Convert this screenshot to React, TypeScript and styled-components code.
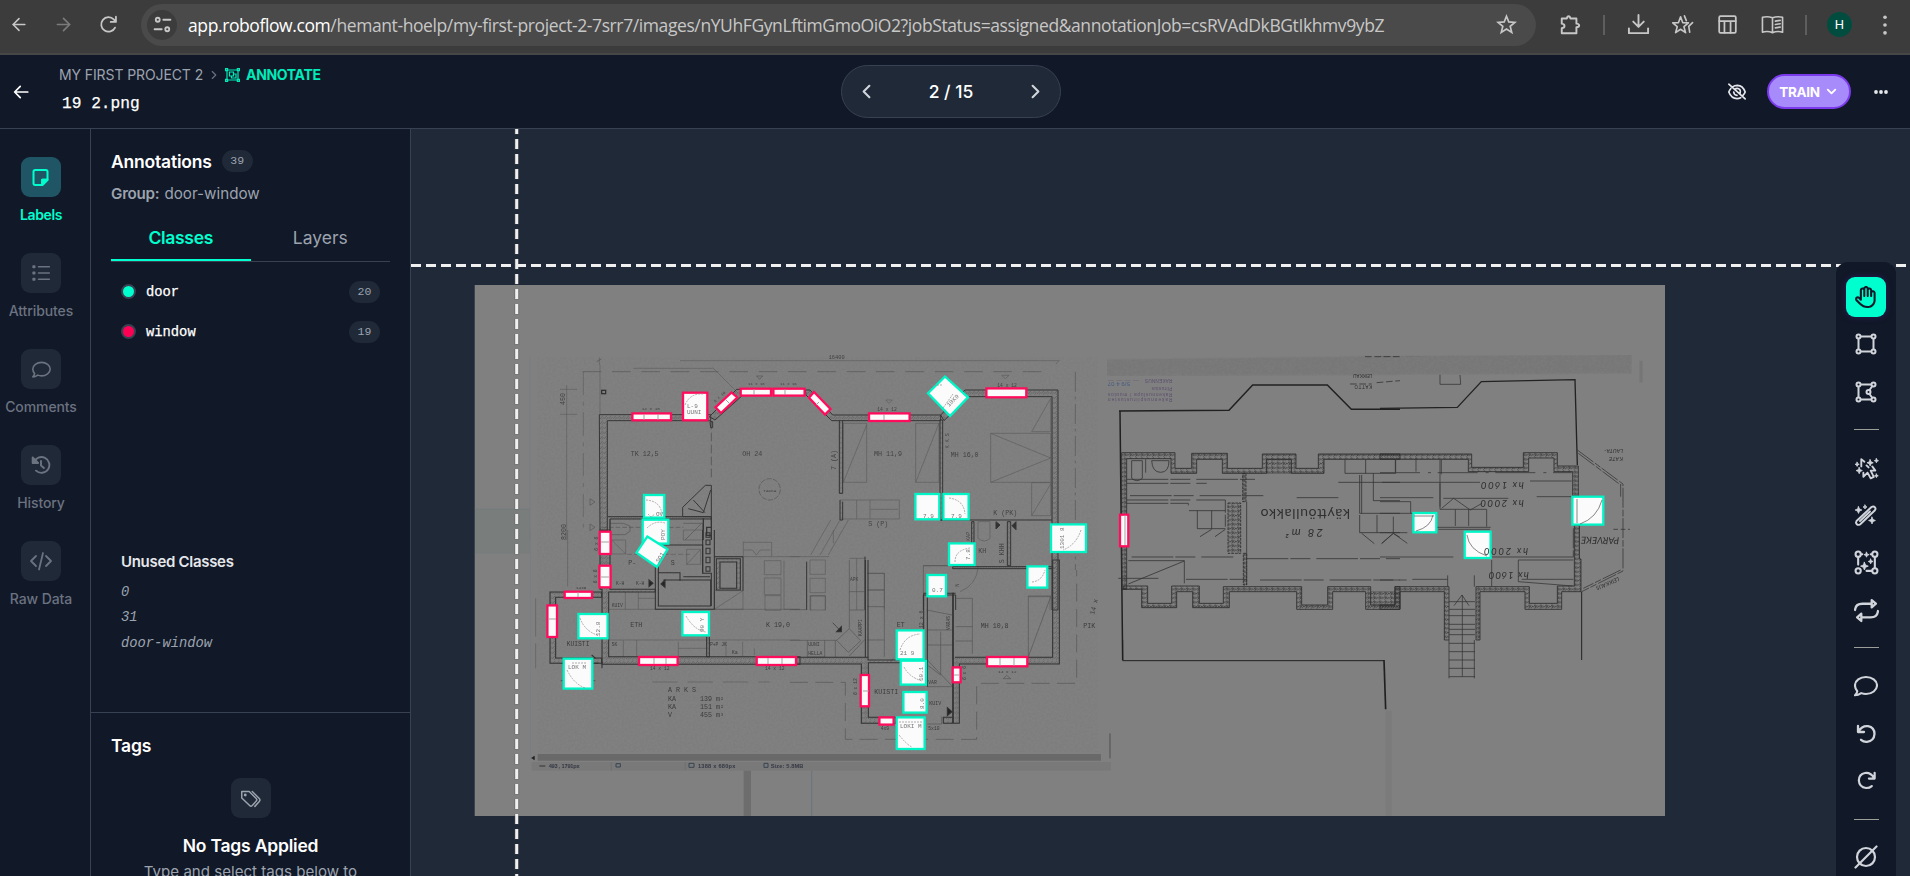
import React from 'react';
import styled, { createGlobalStyle } from 'styled-components';
import { ArrowLeft, ArrowRight, ChevronDown, ChevronLeft, ChevronRight } from 'lucide-react';
import { FaRegHand } from 'react-icons/fa6';

const Global = createGlobalStyle`
  * { box-sizing: border-box; }
  body { margin: 0; background: #111827; overflow: hidden; font-family: Inter, "Liberation Sans", sans-serif; }
`;

const mono = '"Liberation Mono", monospace';

const Page = styled.div`
  width: 1910px; height: 876px; display: flex; flex-direction: column; overflow: hidden;
  background: #111827; color: #fff;
`;
const Browser = styled.div`
  height: 55px; flex: none; background: #3c3c3c; border-bottom: 2px solid #474747;
  display: flex; align-items: center; padding: 0 0 4px 9px; color: #c7c7c7;
`;
const BrowserButton = styled.span<{ $w: number; $dim?: boolean }>`
  width: ${p => p.$w}px; flex: none; display: flex; justify-content: center; align-items: center;
  color: ${p => (p.$dim ? '#7b7b7b' : '#c7c7c7')};
`;
const Address = styled.div`
  width: 1395px; height: 42px; margin-left: 22px; border-radius: 21px; background: #4a4a4a; flex: none;
  display: flex; align-items: center; padding: 0 19px 0 6px;
`;
const SiteInfo = styled.span`
  width: 30px; height: 30px; border-radius: 50%; background: #3c3c3c;
  display: flex; align-items: center; justify-content: center;
`;
const Url = styled.span`
  flex: 1; margin-left: 11px; font: 17.5px/24px "Open Sans", "Noto Sans", sans-serif; letter-spacing: -0.4px;
  color: #c7c7c7; white-space: nowrap;
  b { font-weight: 400; color: #fff; }
`;
const Rule = styled.i`width: 2px; height: 20px; background: #5e5e5e; flex: none;`;
const Avatar = styled.span`
  width: 25px; height: 25px; border-radius: 50%; background: #004d40; color: #fff;
  font: 13px/25px Roboto, sans-serif; text-align: center; flex: none;
`;

const Header = styled.header`
  height: 74px; flex: none; border-bottom: 1px solid #374151; display: grid;
  grid-template-columns: 841px 220px 1fr; align-items: center;
`;
const HeaderLeft = styled.div`display: flex; align-items: center; padding-left: 12px; height: 73px;`;
const Titles = styled.div`margin-left: 29px; padding-bottom: 2px;`;
const Crumbs = styled.div`
  display: flex; align-items: center; font-size: 14px; line-height: 20px; color: #9ca3af; white-space: nowrap;
  svg { flex: none; }
`;
const CrumbText = styled.span`letter-spacing: -0.1px; margin-right: 4px;`;
const Active = styled.span`font-weight: 700; color: #00ebba; margin-left: 6px; letter-spacing: -0.35px;`;
const FileName = styled.div`font: 16.2px/24px ${mono}; margin: 7px 0 0 3px; color: #fff; -webkit-text-stroke: 0.25px #fff;`;
const Pager = styled.div`
  height: 53px; border: 1px solid #374151; border-radius: 27px; background: #1f2937;
  display: flex; align-items: center; justify-content: space-between; padding: 0 13px; font-size: 17.5px; font-weight: 500;
  color: #fff; svg { color: #d1d5db; }
`;
const HeaderRight = styled.div`display: flex; align-items: center; justify-content: flex-end; padding-right: 22px;`;
const Train = styled.button`
  width: 84px; height: 35px; margin: 0 23px 0 20px; border-radius: 18px; border: 2px solid #7c3aed; background: #a78bfa;
  color: #fff; font: 700 13.5px Inter, sans-serif; letter-spacing: -0.3px; display: flex; align-items: center; justify-content: center; gap: 4px; padding: 0;
`;

const Body = styled.div`flex: 1; min-height: 0; display: flex;`;
const Rail = styled.nav`
  width: 91px; flex: none; border-right: 1px solid #374151; padding: 28px 8px 0 0; display: flex; flex-direction: column; align-items: center;
`;
const RailItem = styled.div<{ $on?: boolean }>`
  height: 96px; flex: none; display: flex; flex-direction: column; align-items: center; white-space: nowrap;
  font-size: 14px; line-height: 20px; font-weight: ${p => (p.$on ? 600 : 500)};
  color: ${p => (p.$on ? '#00ffce' : '#6b7280')};
  letter-spacing: ${p => (p.$on ? '-0.35px' : '-0.1px')};
`;
const Tile = styled.span<{ $on?: boolean }>`
  width: 40px; height: 40px; border-radius: 9px; margin-bottom: 8px; display: flex; align-items: center; justify-content: center;
  background: ${p => (p.$on ? '#205565' : '#1f2937')};
`;
const Side = styled.aside`
  width: 320px; flex: none; border-right: 1px solid #374151; display: flex; flex-direction: column;
`;
const Upper = styled.section`height: 584px; flex: none; padding: 21px 20px 0 20px; border-bottom: 1px solid #374151;`;
const TitleRow = styled.div`display: flex; align-items: center; height: 22px; gap: 10px;`;
const Title = styled.h2`margin: 0; padding-top: 1px; font-size: 17.5px; font-weight: 600; line-height: 22px; letter-spacing: -0.2px;`;
const Count = styled.span`
  width: 31px; height: 22px; border-radius: 11px; background: #1f2937; color: #9ca3af; font: 11.5px/22px ${mono}; text-align: center; flex: none;
`;
const Group = styled.div`
  margin-top: 11px; font-size: 15.2px; line-height: 22px; color: #9ca3af;
  b { font-weight: 600; margin-right: 5px; letter-spacing: -0.25px; }
`;
const Tabs = styled.div`display: flex; margin-top: 10px; height: 47px; border-bottom: 1px solid #374151;`;
const Tab = styled.div<{ $on?: boolean }>`
  flex: 1; text-align: center; font-size: 17.5px; line-height: 45px; height: 46px;
  font-weight: ${p => (p.$on ? 600 : 400)}; color: ${p => (p.$on ? '#00ffce' : '#9ca3af')};
  letter-spacing: ${p => (p.$on ? '-0.3px' : '0')};
  border-bottom: 2px solid ${p => (p.$on ? '#00ffce' : 'transparent')};
`;
const Classes = styled.div`height: 290px; padding: 10px 10px 0;`;
const ClassRow = styled.div`height: 40px; display: flex; align-items: center; justify-content: space-between;`;
const Swatch = styled.i<{ $c: string }>`
  width: 15px; height: 15px; border-radius: 50%; border: 2px solid #374151; background: ${p => p.$c};
  flex: none; margin: 0 10px 1px 0;
`;
const ClassName = styled.span`
  flex: 1; padding-top: 2px; font: 13.8px/20px ${mono}; color: #fff; -webkit-text-stroke: 0.25px #fff;
`;
const Unused = styled.div`padding-left: 10px;`;
const UnusedTitle = styled.div`font-size: 15px; font-weight: 600; line-height: 20px; color: #e5e7eb; margin-bottom: 8px; letter-spacing: -0.3px;`;
const UnusedItem = styled.div`font: italic 13.8px/25.3px ${mono}; color: #9ca3af;`;
const Lower = styled.section`padding: 20px 20px 0 20px; display: flex; flex-direction: column; align-items: center; white-space: nowrap;`;
const TagTitle = styled(Title)`align-self: flex-start; line-height: 24px; margin-bottom: 20px;`;
const TagTile = styled(Tile)`margin-bottom: 16px; color: #9ca3af; flex: none;`;
const EmptyText = styled.p`margin: 3px 0 0; font-size: 15.1px; line-height: 24px; color: #9ca3af;`;

const Canvas = styled.main`flex: 1; min-width: 0; background: #1f2937; position: relative; overflow: hidden;
  > svg { display: block; }
`;
const Tools = styled.div`
  position: absolute; right: 14px; top: 133px; bottom: 0; width: 60px; background: #111827; border-radius: 12px 12px 0 0;
  display: flex; flex-direction: column; align-items: center; padding-top: 15px; color: #d1d5db;
`;
const Tool = styled.span<{ $h?: number; $on?: boolean }>`
  width: 40px; height: ${p => p.$h ?? 48}px; flex: none; display: flex; align-items: center; justify-content: center;
  ${p => p.$on && 'background:#00ffce;color:#111827;border-radius:9px;margin-bottom:3px;box-shadow:0 0 6px #4c1d9580;'}
`;
const Divider = styled.i`width: 25px; height: 1px; flex: none; background: #9c9f98;`;

const Ico = ({ s = 24, w = 2, f = 'none', children }: { s?: number; w?: number; f?: string; children: React.ReactNode }) => (
  <svg width={s} height={s} viewBox="0 0 24 24" fill={f} stroke="currentColor" strokeWidth={w} strokeLinecap="round" strokeLinejoin="round">{children}</svg>
);
const star = (x: number, y: number, r: number) =>
  `M${x} ${y - r}L${x + r * 0.3} ${y - r * 0.3}L${x + r} ${y}L${x + r * 0.3} ${y + r * 0.3}L${x} ${y + r}L${x - r * 0.3} ${y + r * 0.3}L${x - r} ${y}L${x - r * 0.3} ${y - r * 0.3}Z`;

const Bubble = ({ s, w }: { s: number; w: number }) => (
  <Ico s={s} w={w}><path d="M12 3c6 0 11 3.7 11 8.4S18 20 12 20c-1.700 0-3.300-.3-4.800-.9C5.700 20.200 3.500 21.300 1 21.300c1.300-1.300 2-2.700 2.300-4.100C1.900 15.600 1 13.600 1 11.400 1 6.700 6 3 12 3Z" /></Ico>
);

const doors = [
  [643.3, 494.3, 665, 518.3], [642, 519, 669, 544.3], [577.7, 613.3, 608.3, 639], [681.7, 611.3, 709.7, 636], [563, 658, 593, 689.3],
  [914.7, 493.3, 940, 520], [942.7, 493.3, 969.3, 520], [948.3, 542.7, 975.3, 565.7], [926.7, 574.3, 946.7, 597], [1026.7, 565.7, 1048, 588.3],
  [1050.3, 523.7, 1086.7, 552.7], [896, 629.7, 924.3, 660], [900, 660, 926.7, 685.3], [902.7, 691.3, 927.3, 713.3], [896, 716.7, 925.3, 749.7],
  [1412.7, 512.3, 1437, 533], [1464, 531, 1491.3, 558.7], [1571.7, 496, 1604, 525.3],
];
const doorPolys = ['647.3,536.5 667.5,549.3 657,567 636.5,552.7', '945,376.500 968,397.300 950,416 928,393.300'];
const windows = [
  [631.7, 412.7, 671.7, 421], [682.3, 392, 708, 421], [740, 388, 771.7, 396.3], [772.7, 388, 805.3, 396.3], [868.3, 412.7, 910.3, 421.7],
  [985.7, 387.7, 1027, 398], [599, 531, 611.3, 554.7], [598.7, 565, 611.3, 588], [564, 591, 592.7, 598.7], [546.7, 604.7, 557.7, 637.7],
  [638.3, 656.3, 678.3, 665.7], [756, 656.3, 796.7, 665.7], [860, 674.3, 869.7, 707], [878.7, 716.7, 894.3, 725.3], [952, 666.7, 961.3, 683],
  [986.3, 656.3, 1028, 667], [1119.3, 514, 1129, 547],
];
const windowPolys = ['715.500,407.300 731.500,392.500 737.300,397.500 721,413', '814,392 830.500,409 825,414.500 809,397.700'];

const Boxes = ({ list, polys, c }: { list: number[][]; polys: string[]; c: string }) => (
  <g fill="#fbfbfb" stroke={c} strokeWidth="2.3">
    {list.map(([a, b, x, y], i) => <rect key={i} x={a + 0.7} y={b + 0.7} width={x - a - 1.4} height={y - b - 1.4} />)}
    {polys.map(p => <polygon key={p} points={p} />)}
  </g>
);

/* Each part of the plan is drawn on a grid three times finer than the canvas. */
const Part = ({ x, y, children }: { x: number; y: number; children: React.ReactNode }) => (
  <g transform={`translate(${x} ${y}) scale(.33333)`}>{children}</g>
);

const UpperLeft = () => (
  <Part x={470} y={270}>
    <g fill="none" stroke="#4b4b4b" strokeWidth="2">
      <path d="M180 260V810M14 717H178" stroke="#717a7c" />
      <path d="M388 262V285M390 285V432M630 272H1765" strokeWidth="1.500" />
      <path d="M380 275l14-8" />
      <path d="M338 305H1720" strokeDasharray="56 32" />
      <path d="M340 305V780" strokeDasharray="70 20 12 20" strokeWidth="1.500" />
      <path d="M290 345V810M270 358H322M270 433H322M728 293L795 360M490 295H728" strokeWidth="1.500" />
      <path d="M724 452V630" strokeDasharray="26 10" strokeWidth="2.500" />
      <circle cx="899" cy="658" r="32" strokeDasharray="16 4" />
      <path d="M360 686l15 10-15 10zM360 762l15 10-15 10zM860 318h18l-9 10z" />
      <path d="M397 772H640" strokeDasharray="14 6" />
      <path d="M420 760h40l20 8v16l-15 10h-40M640 760h58v50M645 810l50-50" />
    </g>
    <g fill="url(#hatch)" stroke="#262626" strokeWidth="3">
      <path d="M388 434H722V452H412V782H390Z" />
      <path d="M638 740V712L706 646H724V740ZM655 716L700 728M700 728L722 660M670 690L705 728" fill="none" />
      <path d="M414 740H724V747H420" /><path d="M420 747V810M700 745V810M724 740V810M710 772h14v24h-14z" fill="none" strokeWidth="4" />
      <path d="M718 440L800 358H820V374L735 450ZM720 455h8v18h-6z" />
    </g>
    <g fill="#333" fontSize="20" fontFamily="Liberation Mono">
      <text x="482" y="557">TK  12,5</text><text x="817" y="557">OH 24</text>
      <text x="880" y="665" fontSize="13">TAKKA</text>
      <text transform="translate(286 405) rotate(-90)">450</text><text transform="translate(288 810) rotate(-90)">8200</text>
      <text x="515" y="421" fontSize="13">14 x 10</text><text x="834" y="346" fontSize="12">11 x 16</text><text x="930" y="346" fontSize="12">11 x 16</text>
      <text transform="translate(736 398) rotate(-43)" fontSize="12">9 x 16</text>
      <rect x="395" y="361" width="12" height="10" fill="none" stroke="#222" strokeWidth="4" />
    </g>
  </Part>
);

const UpperRight = () => (
  <Part x={790} y={340}>
    <g fill="none" stroke="#4b4b4b" strokeWidth="1.600">
      <path d="M798 72l10-12" />
      <path d="M856 96V690" strokeDasharray="60 14 8 14" strokeWidth="2" />
      <path d="M160 250H230V427H160zM160 427L230 255M377 250H447V427H377zM377 427L447 250" />
      <path d="M602 280H782V427H602zM602 280L782 354L602 427M725 275L782 175V275zM725 428H782V527H725zM725 527L782 432" />
      <path d="M150 480H328V537H155M200 480v57M240 480v57M242 508h82M122 540L62 645M150 540L90 645M175 540L115 645M0 650H118M130 570V610" />
      <path d="M564 545v50q20 16 36 0v-50zM287 180h20l-10 10zM635 106h22l-11 10zM400 677H545M510 755q50-20 55-75M715 770H780V810" />
      <path d="M60 660h46v43H60zM60 715h46v43H60zM60 767h46v43H60zM178 655H228M200 655V810M232 700h51v110M232 750h51" />
    </g>
    <g stroke="#242424" strokeWidth="3" fill="url(#hatch)">
      <path d="M450 240V540H458V240z" /><path d="M46 150H60L128 225H452V242H125L48 165Z" />
      <path d="M452 225L525 150H804V810H786V170H535L462 242Z" />
      <path d="M148 242V460H158V242M150 480V540H158V485" />
      <path d="M450 540H786M545 545V677H552V545zM488 680H788V686H488zM652 545h10v132h-10z" />
      <path d="M50 665V810M225 650V810M400 810V765H497V810" fill="none" />
      <path d="M618 545l12 10-12 12zM678 545l-12 12 12 12z" fill="#222" />
    </g>
    <g fill="#333" fontSize="20" fontFamily="Liberation Mono">
      <text x="116" y="58" fontSize="16">16400</text><text x="252" y="348">MH 11,9</text><text x="482" y="350">MH 16,0</text>
      <text x="262" y="214" fontSize="14">14 x 12</text><text x="622" y="140" fontSize="14">14 x 12</text>
      <text x="235" y="558">S  (P)</text><text x="610" y="525">K (PK)</text><text x="565" y="638">KH</text>
      <text transform="translate(139 390) rotate(-90)">7 (A)</text><text transform="translate(478 325) rotate(-90)" fontSize="15">K K S</text>
      <text transform="translate(643 670) rotate(-90)">S KHH</text><text transform="translate(540 603) rotate(-90)" fontSize="15">KAP</text><text x="180" y="724" fontSize="14">APK</text>
      <text transform="translate(508 740) rotate(-90)" fontSize="15">N</text>
    </g>
  </Part>
);

const LowerLeft = () => (
  <Part x={470} y={530}>
    <g fill="none" stroke="#4b4b4b" strokeWidth="1.600">
      <path d="M14 70H180M181 0V690" stroke="#717a7c" />
      <path d="M293 0V170M197 205V320M197 340V415M425 30h42v42h-42zM425 30l42 42M650 58h42v45h-42zM650 103l42-45M640 0h60v30h-60z" />
      <path d="M820 35V80M820 37h85v42M733 80H990M822 60h25l12 15 12-15h30M733 182h86v56h-86zM733 238l86-56M416 238H990M416 330H990M466 185v53M505 185v53M505 205h50" />
      <path d="M883 92h50v42h-50zM883 144h50v50h-50zM885 197h48v44h-48zM942 92V238H990M625 355h85M625 335v45M768 335v45M818 335v45M853 355v20M460 330v50M500 330v50" />
      <path d="M547 456H900" strokeDasharray="76 30" />
      <path d="M272 452H376" strokeWidth="3" /><path d="M470 73H660" strokeDasharray="16 6" />
    </g>
    <g stroke="#222" strokeWidth="3.200" fill="url(#hatch)">
      <path d="M390 0H420V178H556V186H416V380H990V403H396V178H390z" />
      <path d="M240 186H395V202H257V384H395V400H240Z" />
      <path d="M556 45V238H733V0M565 45V228H722V150H580M565 45H698V130H724V228M640 140H720M565 128H630V153" fill="none" />
      <path d="M710 320V380H718V320" /><path d="M739 86H811V180H739zM750 96V175H800V96z" /><path d="M819 80V182M733 80H819M698 0V130" fill="none" />
      <path d="M708 8h12v14h-12zM708 30h12v14h-12zM708 55h12v16h-12zM708 82h12v16h-12zM708 110h12v14h-12z" fill="none" />
      <path d="M537 150l12 10-12 10zM585 150l-12 12 12 10z" fill="#111" /><path d="M396 395v20M365 375l12 10M374 400h12" />
    </g>
    <path d="M203 672H1893V692H203Z" fill="#656565" /><path d="M185 696H1923V722H185Z" fill="#787878" />
    <path d="M424 696V722M646 696V722" stroke="#686868" strokeWidth="2" />
    <path d="M821 722H843V858H821Z" fill="#696969" /><path d="M1025 722V858" stroke="#60707a" strokeWidth="2.500" />
    <path d="M208 708h18M185 684l8-5v10z" stroke="#222" strokeWidth="3" /><path d="M438 701h13v10h-13zM657 700h15v12h-15zM882 700h12v12h-12z" fill="none" stroke="#273846" strokeWidth="3" />
    <g fill="#2b2b2b" fontSize="20" fontFamily="Liberation Mono">
      <text x="475" y="104">P-</text><text x="602" y="104">S</text><text x="481" y="291">ETH</text><text x="290" y="349" fontSize="19">KUISTI</text><text x="888" y="291">K 19,0</text>
      <text x="425" y="348" fontSize="14">SK</text><text x="720" y="348" fontSize="14">P+P  JK</text><text x="785" y="373" fontSize="15">Ka</text>
      <text x="438" y="165" fontSize="14">K-H</text><text x="498" y="165" fontSize="14">K-H</text><text x="425" y="230" fontSize="14">KUIV</text>
      <text x="594" y="487">A R K S</text><text x="594" y="512">KA</text><text x="690" y="512">139 m²</text><text x="594" y="537">KA</text><text x="690" y="537">151 m²</text><text x="594" y="561">V</text><text x="690" y="561">455 m³</text>
      <text x="318" y="178" fontSize="13">14x9</text><text x="540" y="420" fontSize="14">14 x 12</text><text x="885" y="420" fontSize="14">14 x 12</text>
      <text transform="translate(382 160) rotate(-90)" fontSize="14">6 x 6</text><text transform="translate(384 62) rotate(-90)" fontSize="14">6 x 6</text>
      <g fontFamily="Liberation Sans" fontWeight="700" fontSize="17" fill="#242938"><text x="236" y="713" textLength="93">493 , 1791px</text><text x="684" y="713" textLength="112">1388 x 680px</text><text x="902" y="713" textLength="98">Size: 5.8MB</text></g>
    </g>
  </Part>
);

const LowerRight = () => (
  <Part x={790} y={560}>
    <g fill="none" stroke="#444" strokeWidth="1.800">
      <path d="M62 108v43M62 108h44v43M0 149H50M178 0V205M178 95h45M178 150h45M232 40h51V290M232 90h51M232 140h51M232 240h51" />
      <path d="M0 241H140M52 241v50h52v-50M140 241L178 206L212 242L175 277ZM178 288L225 238M136 241v50" />
      <path d="M715 108H783L715 290zM497 115H547V282M497 200h50M497 243h50M412 210h76M412 255h76M412 315L452 345V215M412 300l76 80M412 380h76M410 150l76 15M400 17H545M400 17V100" />
      <path d="M0 367H166V538H560V370H860V30" strokeDasharray="54 22" /><path d="M640 356l10-10 12 10zM455 470v22M412 492h43M310 295l-10 10" />
      <path d="M960 520v75" strokeWidth="3" />
    </g>
    <g stroke="#222" strokeWidth="3.200" fill="url(#hatch)">
      <path d="M0 292H234V300H412V308H235V472H318V490H214V312H0z" />
      <path d="M490 100V490H460V472H488V100zM495 292H788V0H808V312H508V490H488V292" />
      <path d="M226 0V292M234 0V292M401 100H412V380M401 100V292M401 100H497" fill="none" />
      <path d="M472 443l14 12-14 12zM140 215l14-15v15z" fill="#111" /><path d="M128 188l24 25" strokeWidth="2" />
    </g>
    <g fill="#2b2b2b" fontSize="20" fontFamily="Liberation Mono">
      <text x="572" y="205">MH 10,8</text><text x="253" y="401">KUISTI</text><text x="320" y="202">ET</text><text x="418" y="435" fontSize="15">KUIV</text>
      <text x="55" y="259" fontSize="14">UUNI</text><text x="55" y="284" fontSize="14">HELLA</text><text x="272" y="510" fontSize="14">4x9</text><text x="415" y="510" fontSize="14">5x10</text><text x="625" y="338" fontSize="13">14 x 12</text><text x="415" y="373" fontSize="14">VAR</text>
      <text transform="translate(398 205) rotate(-90)" fontSize="15">12 x 6</text><text transform="translate(200 405) rotate(-90)" fontSize="14">6 x 12</text><text transform="translate(480 210) rotate(-90)" fontSize="14">VARAS</text><text transform="translate(528 360) rotate(-90)" fontSize="14">6 x 6</text><text transform="translate(217 228) rotate(-90)" fontSize="14">KAAPPI</text>
      <text transform="translate(912 165) rotate(-75)">14 x</text><text x="880" y="205">PIK</text>
    </g>
  </Part>
);

const AtticLeft = () => (
  <Part x={1100} y={340}>
    <path d="M22 58L900 48L1595 44V100L900 104L22 107Z" fill="#757575" filter="url(#grain)" />
    <g fill="none" stroke="#161616" strokeWidth="4.500">
      <path d="M57 213L387 211L458 135H682L754 208H900M60 213L68 960" /><path d="M68 900V962H852" strokeWidth="3" />
      <path d="M852 960L857 1108" strokeWidth="5" />
    </g>
    <path d="M866 1112L866 1428" stroke="#7b7b7b" strokeWidth="18" />
    <g stroke="#242424" strokeWidth="2.500" fill="url(#dense)">
      <path d="M65 338H225V385H275V340H382V385H487V342H588V385H655V342H900V358H672V400H574V358H500V400H367V358H290V400H213V356H80V748H65Z" />
      <path d="M70 738H143V790H215V738H298V790H370V740H605V795H683V740H812V795H885V740H900V755V808H797V755H698V808H590V755H388V803H278V755H230V803H125V748H70Z" />
      <path d="M500 358H574V400H500ZM812 755H885V795H812Z" strokeWidth="1" />
      <path d="M384 489H422V640H384zM428 400h10v85h-10zM430 640h10v95h-10z" strokeDasharray="8 3" />
    </g>
    <g fill="none" stroke="#2b2b2b" strokeWidth="2.400">
      <path d="M80 418H465M80 430H320M90 467H495M80 480H376V560M80 490H265V512H376M590 473H720M715 427H900M95 651H400M440 656H900M258 718H440M480 720H900M55 715H175" strokeDasharray="125 6 60 18" />
      <path d="M440 485V735M85 662H253V730M85 732L253 663M292 512V566H376M335 512v54M300 590l35-22M345 590l31-22M95 362V415q15 14 32 0V362zM137 358v40M155 362q2 35 27 35t25-35z" />
      <path d="M735 358V400H887V358M797 358v42M779 405V520H900M785 405V520M779 525V578H900M831 525v53M785 580L823 611M845 611L880 580L900 592M820 400V482H900" />
      <path d="M750 132h65M795 50h105M830 128l70-6" strokeDasharray="20 8" />
    </g>
    <g fill="#262626">
      <text transform="translate(750 506) rotate(180)" fontSize="42" fontFamily="Lato" textLength="268">käyttöullakko</text>
      <text transform="translate(669 567) rotate(180)" fontSize="34" fontFamily="Lato" fontStyle="italic" textLength="112">28 m²</text>
      <g fontSize="14" fill="#57486b" fontFamily="Liberation Sans"><text transform="translate(217 117) rotate(180)" textLength="82">RAKENNUS</text><text transform="translate(90 127) rotate(180)" fill="#3d5783" fontSize="18" textLength="67">5/9 4 07</text><text transform="translate(217 142) rotate(180)" textLength="62">Piirustus</text><text transform="translate(217 158) rotate(180)" textLength="193">Rakennuslupa / muutos</text><text transform="translate(217 175) rotate(180)" textLength="193">Rakennuspiirustusten</text></g>
      <path d="M24 121H120" stroke="#57486b" strokeDasharray="18 7" /><text transform="translate(817 102) rotate(180)" fontSize="14" textLength="58">LEIKKAU</text><text transform="translate(817 136) rotate(180)" fontSize="14" textLength="54">KATTO</text>
    </g>
  </Part>
);

const AtticRight = () => (
  <Part x={1380} y={340}>
    <g fill="none" stroke="#181818" strokeWidth="4"><path d="M0 205L232 202L304 125L585 119L592 375" /><path d="M605 755V960" strokeWidth="3" /></g>
    <g fill="url(#dense)" stroke="#242424" strokeWidth="2.500">
      <path d="M0 342H275V382H430V338H532V378H595V468H578V395H522V354H446V395H265V358H0z" />
      <path d="M583 556H598V657H603V755H545V808H435V755H300V900H288V740H448V790H532V738H583Z" />
      <path d="M60 740H207V900H193V755H60V808H0V795H45V740Z" />
    </g>
    <g fill="none" stroke="#2d2d2d" strokeWidth="2.300">
      <path d="M0 427H300M450 423H575M0 473H160M190 475H385M470 470H575M0 485H92V520M0 520H100M0 578H82M5 610l35-30 42 30M40 530v48M180 360V508H320V560M226 508v50M266 508v50M185 505l36-30 50 35 35-20M170 562H332M175 568h155M0 651H220M335 651H580M0 720H80M97 718H203M425 718H580M415 660H580M415 660V725L578 738" />
      <path d="M0 398H575" strokeDasharray="120 24 9 20" /><path d="M108 355v40M46 358v38M184 358v45M180 430v70M203 706V740M283 706V740M335 660V740M247 765V1010M222 797L246 765L267 797M207 900V1015M283 900V1015M207 785h78M207 808h78M207 827h78M207 853h78M207 868h78M207 884h78M207 910h78M207 935h78M207 960h78M207 985h78M207 1010h78" />
      <path d="M592 330L729 432V693L605 755M722 432V470M595 340L722 435M722 690L610 745M580 565V655M598 556V655" strokeDasharray="60 6 20 5" /><path d="M180 103V133H242L240 105" /><path d="M0 50H350M190 50V77Q150 75 140 60" strokeDasharray="55 8 8 8" />
      <path d="M700 568H750" strokeDasharray="14 8" />
    </g>
    <path d="M783 62V128" stroke="#757575" strokeWidth="10" />
    <g fill="#262626" fontFamily="Lato" fontStyle="italic" fontSize="29">
      <text transform="translate(431 427) rotate(180)" textLength="128">hx 1600</text><text transform="translate(431 480) rotate(180)" textLength="130">hx 2000</text>
      <text transform="translate(446 695) rotate(180)" textLength="120">hx 1600</text>
      <text transform="translate(718 592) rotate(181)" textLength="115">PARVEKE</text>
      <g fontSize="17"><text transform="translate(729 326) rotate(180)" textLength="56">LAUTA-</text><text transform="translate(729 350) rotate(180)" textLength="42">KATE</text><text transform="translate(715 711) rotate(157)" textLength="74">LEIKKAUS</text></g>
    </g>
  </Part>
);

/* Details seen inside the highlighted door and window regions. */
const BoxDetails = () => (
  <g fill="none" stroke="#8c8c8c" strokeWidth=".7">
    <path d="M646 500q15 1 16 15M648 514l3 3 4-3M647 528q8-8 18-5M580 618q5 14 20 18M686 616q8 14 20 16M567 670q7 14 18 18M572 663h15M685 405q5-12 18-11M931 385h12M953 394l-10 14M949 498q15 2 16 16M955 562q0-12 15-14M1081 530q-5 15-18 20M900 650q5-15 20-16M904 667q5 10 18 14M899 735q8 10 13 12M899 722h24M1032 582q10-1 13-12" strokeDasharray="2 1" />
    <g stroke="#555"><path d="M1433 515q-2 12-17 16M1467 535q2 15 20 21M1602 500q-5 18-22 24M1577 499v24M1414 516h20" /></g>
    <g stroke="#999" strokeWidth=".9"><path d="M644 414v6M658 414v6M754 389v6M785 389v6M884 414v6M1000 658v8M1014 658v8M654 658v6M666 658v6M768 658v6M782 658v6M578 592v5M601 542h8M601 577h8M549 619h7M863 691h6M954 675h5M726 400l3 3M819 402l-3 3M1125 515v30" /></g>
    <g fill="#777" stroke="none" fontSize="6" fontFamily="Liberation Mono">
      <text x="687" y="408">L-9</text><text x="687" y="414">UUNI</text><text x="568" y="669">LOK M</text><text x="923" y="518">7.9</text><text x="951" y="518">7.9</text><text x="932" y="592">0.7</text><text x="900" y="655">21 9</text><text x="900" y="728">LOKI M</text><text x="656" y="516">OV</text>
      <text transform="translate(600 636) rotate(-90)">12.8</text><text transform="translate(704 632) rotate(-90)">90 Y</text><text transform="translate(665 540) rotate(-90)">POY</text><text transform="translate(1064 549) rotate(-90)">1301 8</text><text transform="translate(970 560) rotate(-90)">7.8</text><text transform="translate(923 681) rotate(-90)">10.1</text><text transform="translate(924 709) rotate(-90)">8.0</text><text transform="translate(949 407) rotate(-45)">10X9</text><text transform="translate(659 563) rotate(-60)">SO1</text>
    </g>
    <text transform="translate(1528 548) rotate(180)" fill="#2f2f2f" stroke="none" fontFamily="Lato" fontStyle="italic" fontSize="9.5" textLength="44">hx 2000</text>
  </g>
);

const Plan = () => (
  <svg width="1499" height="747" viewBox="411 129 1499 747">
    <defs>
      <pattern id="hatch" width="13" height="15" patternUnits="userSpaceOnUse"><path d="M0 12L8 2M6 14l5-8" stroke="#4a4a4a" strokeWidth="1.800" fill="none" /></pattern>
      <pattern id="dense" width="17" height="13" patternUnits="userSpaceOnUse"><path d="M0 9L7 1M4 12L12 3M8 3v7M12 11l5-7" stroke="#262626" strokeWidth="2.200" fill="none" /></pattern>
      <filter id="grain" x="0" y="0" width="100%" height="100%">
        <feTurbulence type="fractalNoise" baseFrequency=".45" numOctaves="2" seed="4" />
        <feColorMatrix values="0 0 0 0 .3  0 0 0 0 .3  0 0 0 0 .3  .5 0 0 0 -.12" result="n" />
        <feComposite in="n" in2="SourceGraphic" operator="in" result="m" /><feMerge><feMergeNode in="SourceGraphic" /><feMergeNode in="m" /></feMerge>
      </filter>
    </defs>
    <rect x="474.700" y="285" width="1190.300" height="531" fill="#808080" />
    <rect x="475" y="509" width="55" height="44" fill="#797d7b" />
    <path d="M537 357H1098V752H537Z" fill="#7c7c7c" filter="url(#grain)" opacity=".5" />
    <g opacity=".82"><UpperLeft /><UpperRight /><LowerLeft /><LowerRight /></g>
    <g opacity=".9"><AtticRight /><AtticLeft /></g>
    <Boxes list={windows} polys={windowPolys} c="#ff0c5c" />
    <Boxes list={doors} polys={doorPolys} c="#00f5c6" />
    <BoxDetails />
    <g stroke="#555" strokeWidth="5" opacity=".35"><path d="M516.700 124V876" strokeDasharray="10.500 4.500" /></g>
    <g stroke="#f0f0f0" strokeWidth="3"><path d="M516.700 124V876M411 265.500H1910" strokeDasharray="10 5" /></g>
  </svg>
);

const GlyphSvg = styled.svg`display: block; margin-left: 4px;`;
function Glyph() {
  return (
    <GlyphSvg width="15" height="14" viewBox="0 0 15 14" fill="none" stroke="#00ebba" strokeWidth="1.200">
      <path d="M2 2h11v10H2zM4.500 4h4v4h-4zM8.500 6H11v4H6.500V8" /><path d="M.6.600h2v2h-2zM12.400.600h2v2h-2zM.6 11.400h2v2h-2zM12.400 11.400h2v2h-2z" />
    </GlyphSvg>
  );
}

export default function App() {
  return (
    <Page>
      <Global />
      <Browser>
        <BrowserButton $w={20}><ArrowLeft size={21} strokeWidth={1.9} /></BrowserButton>
        <BrowserButton $w={69} $dim><ArrowRight size={21} strokeWidth={1.9} /></BrowserButton>
        <BrowserButton $w={21}><Ico s={21}><path d="M19.500 15.500A8.300 8.300 0 1 1 18 6.200L20.500 9M20.500 3v6h-6" /></Ico></BrowserButton>
        <Address>
          <SiteInfo><Ico s={19} w={2.3}><circle cx="6" cy="6" r="2.500" /><path d="M13 6h9M2 18h9" /><circle cx="18" cy="18" r="2.500" /></Ico></SiteInfo>
          <Url><b>app.roboflow.com</b>/hemant-hoelp/my-first-project-2-7srr7/images/nYUhFGynLftimGmoOiO2?jobStatus=assigned&amp;annotationJob=csRVAdDkBGtIkhmv9ybZ</Url>
          <Ico s={21} w={1.9}><path d="M12 2.500l2.600 6.500 7 .5-5.400 4.500 1.800 7-6-3.900-6 3.900 1.800-7L2.400 9.500l7-.5Z" strokeLinejoin="miter" /></Ico>
        </Address>
        <BrowserButton $w={67}><Ico s={22} w={2.1}><path d="M3 5h5.500q.5-2.500 2-2.500T12.500 5H19v5.500q3 .3 3 2t-3 2V21H3v-5.500q3-.5 3-2.500T3 10.500Z" /></Ico></BrowserButton>
        <Rule />
        <BrowserButton $w={66}><Ico s={23}><path d="M12 2v12M6.500 9l5.500 5.500L17.500 9M2 16v5h20v-5" /></Ico></BrowserButton>
        <BrowserButton $w={23}><Ico s={23} w={1.7}><path d="M10 4l2.200 6 6 .3-4.700 4 1.700 6.200-5.200-3.500-5.200 3.500 1.700-6.200-4.700-4 6-.3ZM14 3l2 5M22.500 10l-4 4 1 6" /></Ico></BrowserButton>
        <BrowserButton $w={67}><Ico s={21}><rect x="2.500" y="2.500" width="19" height="19" rx="1.500" /><path d="M2.500 8h19M8.500 8v13.500M15.500 8v13.500" /></Ico></BrowserButton>
        <BrowserButton $w={23}><Ico s={25} w={1.7}><path d="M12 5Q7 3 1.500 4.500V20Q7 18.500 12 20.500 17 18.500 22.500 20V4.500Q17 3 12 5V20.500M15 8.500l5-.8M15 12l5-.8M15 15.500l5-.8" /></Ico></BrowserButton>
        <BrowserButton $w={43}><Rule /></BrowserButton>
        <Avatar>H</Avatar>
        <BrowserButton $w={65}><Ico s={22} f="currentColor" w={0}><circle cx="12" cy="3.500" r="2" /><circle cx="12" cy="12" r="2" /><circle cx="12" cy="20.500" r="2" /></Ico></BrowserButton>
      </Browser>
      <Header>
        <HeaderLeft>
          <Ico s={18} w={2.3}><path d="M21 12H4M11 4.500L3.500 12l7.500 7.500" /></Ico>
          <Titles>
            <Crumbs>
              <CrumbText>MY FIRST PROJECT 2</CrumbText><ChevronRight size={14} color="#6b7280" /><Glyph /><Active>ANNOTATE</Active>
            </Crumbs>
            <FileName>19 2.png</FileName>
          </Titles>
        </HeaderLeft>
        <Pager><ChevronLeft size={23} strokeWidth={2.200} /><span>2 / 15</span><ChevronRight size={23} strokeWidth={2.200} /></Pager>
        <HeaderRight>
          <svg width="20" height="18" viewBox="0 0 24 22" fill="none" stroke="#e5e7eb" strokeWidth="2.100" strokeLinecap="round"><path d="M2 1.500l20 18M6.500 4.800Q9 3 12.500 3q6.500.2 9.500 8-1 2.500-3 4.500M4.500 6.700Q3 8.500 2 11q3 8 10 8 2.500 0 4.500-1M9 8q3.500-3 6.500.2 1.300 2 .3 4.300M8 11q.5 4 4 4.200" /></svg>
          <Train>TRAIN <ChevronDown size={15} strokeWidth={3} /></Train>
          <svg width="14" height="4" fill="#e5e7eb"><circle cx="2" cy="2" r="1.900" /><circle cx="7" cy="2" r="1.900" /><circle cx="12" cy="2" r="1.900" /></svg>
        </HeaderRight>
      </Header>
      <Body>
        <Rail>
          <RailItem $on><Tile $on><Ico s={21} w={2.300}><path d="M20 14V5.500Q20 3.500 18 3.500H6Q4 3.500 4 5.500V18.500Q4 20.500 6 20.500H14L20 14.500H14V20.500" /><path d="M14 14.500h6l-6 6z" fill="currentColor" /></Ico></Tile>Labels</RailItem>
          <RailItem><Tile><Ico s={20} w={1.800}><path d="M9 4.500h13M9 12h13M9 19.500h13" /><path d="M2.500 3.500h2v2h-2zM2.500 11h2v2h-2zM2.500 18.500h2v2h-2z" fill="currentColor" /></Ico></Tile>Attributes</RailItem>
          <RailItem><Tile><Bubble s={19} w={2} /></Tile>Comments</RailItem>
          <RailItem><Tile><Ico s={20} w={2.300}><path d="M3.500 9A9.500 9.500 0 1 1 6 18.800M12 7v5.500l3.500 3" /><path d="M2 3v6.500h6.500z" fill="currentColor" /></Ico></Tile>History</RailItem>
          <RailItem><Tile><Ico s={24} w={1.800}><path d="M7 7l-5 5 5 5M17 7l5 5-5 5M14 4l-4 16.500" /></Ico></Tile>Raw Data</RailItem>
        </Rail>
        <Side>
          <Upper>
            <TitleRow><Title>Annotations</Title><Count>39</Count></TitleRow>
            <Group><b>Group:</b>door-window</Group>
            <Tabs><Tab $on>Classes</Tab><Tab>Layers</Tab></Tabs>
            <Classes>
              <ClassRow><Swatch $c="#00ffce" /><ClassName>door</ClassName><Count>20</Count></ClassRow>
              <ClassRow><Swatch $c="#ff0055" /><ClassName>window</ClassName><Count>19</Count></ClassRow>
            </Classes>
            <Unused>
              <UnusedTitle>Unused Classes</UnusedTitle>
              <UnusedItem>0</UnusedItem><UnusedItem>31</UnusedItem><UnusedItem>door-window</UnusedItem>
            </Unused>
          </Upper>
          <Lower>
            <TagTitle>Tags</TagTitle>
            <TagTile><Ico s={21} w={1.700}><path d="M2 4h8.500l8 8q1.500 1.500 0 3L14 20q-1.500 1.500-3 0L2 11.500ZM14 4l8 8q1.500 1.700 0 3.500L17 21" /><circle cx="6" cy="8" r=".8" /></Ico></TagTile>
            <Title>No Tags Applied</Title>
            <EmptyText>Type and select tags below to</EmptyText>
          </Lower>
        </Side>
        <Canvas>
          <Plan />
          <Tools>
            <Tool $on $h={40}><FaRegHand size={22} /></Tool>
            <Tool><Ico s={24} w={2}><path d="M7 4.500h10M7 19.500h10M4.500 7v10M19.500 7v10" /><circle cx="4.500" cy="4.500" r="2" /><circle cx="19.500" cy="4.500" r="2" /><circle cx="4.500" cy="19.500" r="2" /><circle cx="19.500" cy="19.500" r="2" /></Ico></Tool>
            <Tool><Ico s={24} w={2}><path d="M7 4.500h10M7 19.500h10M4.500 7v10M18 6.500L15.500 10M18 17.500l-2.500-3.500" /><circle cx="4.500" cy="4.500" r="2" /><circle cx="19.500" cy="4.500" r="2" /><circle cx="4.500" cy="19.500" r="2" /><circle cx="19.500" cy="19.500" r="2" /><circle cx="14.500" cy="12" r="2" /></Ico></Tool>
            <Tool $h={13} /><Divider />
            <Tool $h={14} />
            <Tool><Ico s={25} w={1.800}><path d="M7 10V3l3 2.500M12 9l2 2M17.500 10l3 4h-4.500l3 6-3 1.500-3-5.500L9 20V16" /><g fill="currentColor" strokeWidth=".8"><path d={star(3, 8, 2)} /><path d={star(15.5, 6.5, 3)} /><path d={star(21.5, 4.5, 2)} /><path d={star(5, 14, 3)} /><path d={star(21.5, 19, 1.8)} /></g></Ico></Tool>
            <Tool $h={46}><Ico s={24} w={1.900}><path d="M2.500 18L17.500 4q2-1.300 3.500.3 1.200 1.700-.3 3.200L6 21.500q-2 1-3.400-.5-1.100-1.500-.1-3ZM6 18L16 8.500" /><g fill="currentColor" strokeWidth=".8"><path d={star(4.5, 7, 3.4)} /><path d={star(11, 4, 2)} /><path d={star(18, 17.5, 3.4)} /></g></Ico></Tool>
            <Tool $h={49}><Ico s={25} w={2}><circle cx="4" cy="4" r="2.500" /><circle cx="20" cy="4" r="2.500" /><circle cx="4" cy="20" r="2.500" /><circle cx="20" cy="20" r="2.500" /><path d="M4 7v7M20 7v10M12 20h5M7 4h1M16 4h1" /><g fill="currentColor" strokeWidth=".8"><path d={star(12, 4.5, 2.4)} /><path d={star(10, 15.5, 3.7)} /><path d={star(16, 11, 2.3)} /></g></Ico></Tool>
            <Tool $h={46}><Ico s={25} w={2.200}><path d="M1 11.500Q1.500 5.500 8 5.500H17M23 12.500Q22.500 18.500 16 18.500H7M17 2l4 3.500-4 3.500zM7 15l-4 3.500L7 22z" /></Ico></Tool>
            <Tool $h={14} /><Divider />
            <Tool $h={14} />
            <Tool><Bubble s={24} w={2.100} /></Tool>
            <Tool $h={47}><Ico s={24} w={2.300}><path d="M4 4v6h6M4.500 9.500Q8 3.500 14 4.200 20.500 5.500 20.500 12 20 19 13 19.800 9.500 20 7 17.800" /></Ico></Tool>
            <Tool $h={47}><Ico s={23} w={2.300}><path d="M20.500 4v6h-6M20 9.500Q16.500 3.500 10.500 4.200 4 5.500 4 12q.5 7 7.500 7.800 3.500.2 6-2" /></Ico></Tool>
            <Tool $h={15} /><Divider />
            <Tool $h={13} />
            <Tool><Ico s={24} w={2.200}><circle cx="12" cy="12" r="9" /><path d="M1.500 22.500l21-21" /></Ico></Tool>
          </Tools>
        </Canvas>
      </Body>
    </Page>
  );
}
